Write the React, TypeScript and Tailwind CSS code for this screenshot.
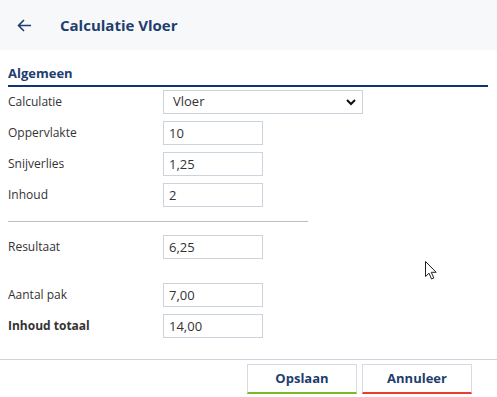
import React from "react";

const labelCls = "w-[155px] shrink-0 text-[12px] text-[#333333]";
const inputCls =
  "w-[100px] h-[24px] border border-[#cdd3dc] bg-white px-[5px] text-[13px] text-[#333333] outline-none";

function Row({ label, value, bold, mt }: { label: string; value: string; bold?: boolean; mt?: string }) {
  return (
    <div className={`flex items-center h-[24px] ${mt ?? ""}`}>
      <div className={`${labelCls} ${bold ? "font-bold" : ""}`}>{label}</div>
      <input className={inputCls} defaultValue={value} style={{ fontFamily: "'Open Sans', sans-serif" }} />
    </div>
  );
}

export default function App() {
  return (
    <div className="relative w-[497px] h-[397px] bg-white overflow-hidden" style={{ fontFamily: "'Open Sans', sans-serif" }}>
      <div className="h-[50px] bg-[#f7f8fa] flex items-center">
        <svg className="ml-[17px]" width="15" height="13" viewBox="0 0 15 13" fill="none">
          <path d="M14 6.5H2M7 1L1.5 6.5L7 12" stroke="#1f3d6e" strokeWidth="1.6" />
        </svg>
        <div className="ml-[28px] text-[15px] font-bold text-[#1f3d6e]">Calculatie Vloer</div>
      </div>
      <div className="px-[8px]">
        <div className="mt-[14px] text-[13px] font-bold text-[#1f3d6e] leading-[18px]">Algemeen</div>
        <div className="mt-[3px] h-[2px] w-[480px] bg-[#0e3475]" />
        <div className="flex flex-col gap-[7px] mt-[3px]">
          <div className="flex items-center h-[24px]">
            <div className={labelCls}>Calculatie</div>
            <div className="relative w-[200px] h-[24px] border border-[#cdd3dc] flex items-center pl-[9px] text-[13px] text-[#333333]">
              Vloer
              <svg className="absolute right-[6px] top-[8px]" width="10" height="7" viewBox="0 0 10 7" fill="none">
                <path d="M1 1L5 5L9 1" stroke="#111" strokeWidth="2" />
              </svg>
            </div>
          </div>
          <Row label="Oppervlakte" value="10" />
          <Row label="Snijverlies" value="1,25" />
          <Row label="Inhoud" value="2" />
        </div>
        <div className="mt-[14px] h-px w-[300px] bg-[#bdbdbd]" />
        <div className="mt-[13px] flex flex-col">
          <Row label="Resultaat" value="6,25" />
          <Row label="Aantal pak" value="7,00" mt="mt-[24px]" />
          <Row label="Inhoud totaal" value="14,00" bold mt="mt-[7px]" />
        </div>
      </div>
      <div className="mt-[21px] h-px bg-[#cfd4da]" />
      <div className="flex justify-end gap-[5px] pr-[25px] mt-[4px]">
        <button className="w-[110px] h-[30px] border border-[#d5dae1] border-b-2 border-b-[#7ab929] text-[13px] font-bold text-[#1f3d6e] bg-white">
          Opslaan
        </button>
        <button className="w-[110px] h-[30px] border border-[#d5dae1] border-b-2 border-b-[#ef3b2c] text-[13px] font-bold text-[#1f3d6e] bg-white">
          Annuleer
        </button>
      </div>
      <svg className="absolute left-[425px] top-[261px]" width="12" height="19" viewBox="0 0 12 19">
        <path d="M0.5 0.5V15.5L4 12.2L6.5 18L8.8 17L6.3 11.3H11.2Z" fill="white" stroke="#222" strokeWidth="1" strokeLinejoin="round" />
      </svg>
    </div>
  );
}
